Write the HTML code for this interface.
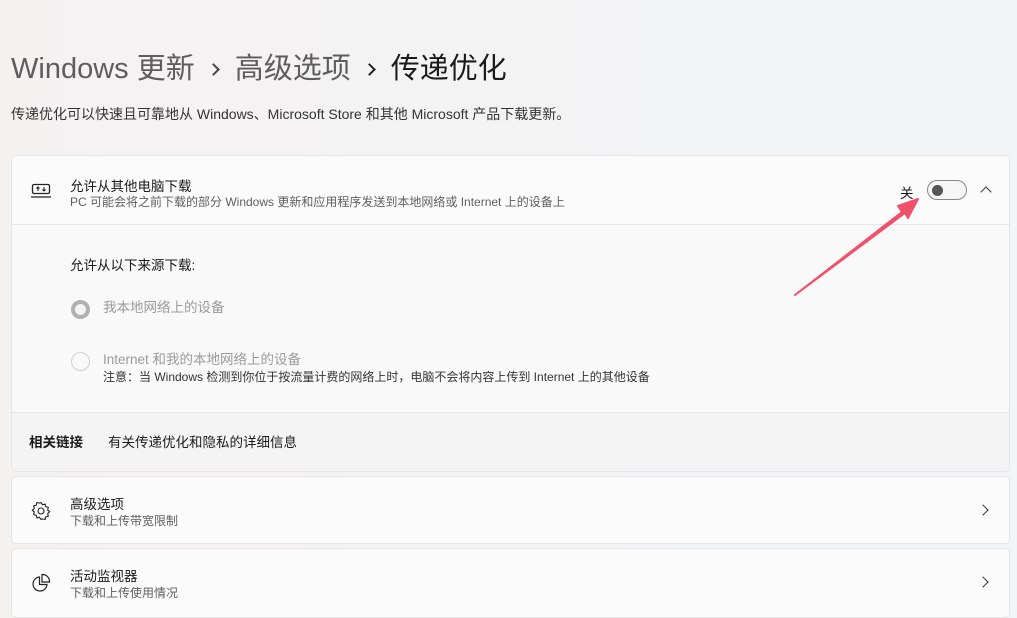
<!DOCTYPE html>
<html><head><meta charset="utf-8"><style>
*{margin:0;padding:0;box-sizing:border-box}
body{width:1017px;height:612px;overflow:hidden;background:linear-gradient(90deg,#f5f1f1 0%,#f3f3f4 40%,#f3f4f6 100%);font-family:"Liberation Sans","Noto Sans CJK SC",sans-serif;color:#1b1b1b;position:relative}
.abs{position:absolute}
h1{position:absolute;left:11px;top:45px;font-size:29px;font-weight:400;color:#1b1b1b;white-space:nowrap}
h1 .g{color:#5d5d5d}
.card{position:absolute;left:11px;width:999px;background:#fbfbfb;border:1px solid #e5e5e5;border-radius:5px;overflow:hidden}
.t{font-size:13.5px;color:#1b1b1b}
.s{font-size:12px;color:#5f5f5f}
.chev{position:absolute;right:22px;width:8px;height:8px;border-right:1.3px solid #333;border-top:1.3px solid #333;transform:rotate(45deg)}
.sep{display:inline-block;width:9px;height:9px;border-right:2px solid #444;border-top:2px solid #444;transform:rotate(45deg);margin:0 17px 4px 14px}
</style></head><body>
<h1><span class="g">Windows 更新</span><span class="sep"></span><span class="g">高级选项</span><span class="sep" style="border-color:#222"></span>传递优化</h1>
<div class="abs" style="left:11px;top:104px;font-size:14px;color:#333">传递优化可以快速且可靠地从 Windows、Microsoft Store 和其他 Microsoft 产品下载更新。</div>

<div class="card" style="top:155px;height:317px">
 <div style="height:69px;border-bottom:1px solid #e5e5e5;position:relative;background:#fbfbfb">
  <svg class="abs" style="left:19px;top:27px" width="20" height="16" viewBox="0 0 20 16"><rect x="1.5" y="1.5" width="17" height="9" rx="1.5" fill="none" stroke="#222" stroke-width="1.3"/><path d="M7 8V4M5.5 5.5L7 4l1.5 1.5M13 4v4M11.5 6.5L13 8l1.5-1.5" stroke="#222" stroke-width="1.1" fill="none"/><path d="M0 14h20" stroke="#222" stroke-width="1.3"/></svg>
  <div class="t abs" style="left:58px;top:19px">允许从其他电脑下载</div>
  <div class="s abs" style="left:58px;top:37px">PC 可能会将之前下载的部分 Windows 更新和应用程序发送到本地网络或 Internet 上的设备上</div>
  <div class="t abs" style="left:888px;top:26px">关</div>
  <div class="abs" style="left:915px;top:24px;width:40px;height:20px;border:1px solid #888;border-radius:10px;background:#f6f6f6"><div style="position:absolute;left:4px;top:4px;width:11px;height:11px;border-radius:50%;background:#555"></div></div>
  <div class="abs" style="left:970px;top:32px;width:8px;height:8px;border-left:1.3px solid #333;border-top:1.3px solid #333;transform:rotate(45deg)"></div>
 </div>
 <div style="height:188px;position:relative;background:#f9f9fa;border-bottom:1px solid #e5e5e5">
  <div class="t abs" style="left:58px;top:29px">允许从以下来源下载:</div>
  <div class="abs" style="left:59px;top:75px;width:19px;height:19px;border-radius:50%;border:4px solid #b0b0b0;background:#f3f3f3"></div>
  <div class="abs" style="left:91px;top:71px;font-size:13.5px;color:#9a9a9a">我本地网络上的设备</div>
  <div class="abs" style="left:59px;top:127px;width:19px;height:19px;border-radius:50%;border:1px solid #cfcfcf"></div>
  <div class="abs" style="left:91px;top:123px;font-size:13.5px;color:#9a9a9a">Internet 和我的本地网络上的设备</div>
  <div class="abs" style="left:91px;top:143px;font-size:12px;color:#333">注意：当 Windows 检测到你位于按流量计费的网络上时，电脑不会将内容上传到 Internet 上的其他设备</div>
 </div>
 <div style="height:58px;position:relative;background:#f4f4f4">
  <div class="abs" style="left:17px;top:18px;font-size:13.5px;font-weight:bold">相关链接</div>
  <div class="abs" style="left:96px;top:18px;font-size:13.5px">有关传递优化和隐私的详细信息</div>
 </div>
</div>

<div class="card" style="top:476px;height:68px">
 <svg class="abs" style="left:19px;top:24px" width="20" height="20" viewBox="0 0 20 20"><path d="M10 1.5l1.5 2.2 2.6-.6.6 2.6 2.6.7-.6 2.6 2 1.8-2 1.8.6 2.6-2.6.7-.6 2.6-2.6-.6L10 18.5l-1.5-2.2-2.6.6-.6-2.6-2.6-.7.6-2.6-2-1.8 2-1.8-.6-2.6 2.6-.7.6-2.6 2.6.6z" fill="none" stroke="#222" stroke-width="1.1"/><circle cx="10" cy="10" r="3" fill="none" stroke="#222" stroke-width="1.1"/></svg>
 <div class="t abs" style="left:58px;top:16px">高级选项</div>
 <div class="s abs" style="left:58px;top:35px">下载和上传带宽限制</div>
 <div class="chev" style="top:29px"></div>
</div>
<div class="card" style="top:548px;height:70px">
 <svg class="abs" style="left:19px;top:24px" width="20" height="20" viewBox="0 0 20 20"><path d="M8.5 4A7 7 0 1 0 16 11.5H8.5z" fill="none" stroke="#222" stroke-width="1.2"/><path d="M11 1.5A7 7 0 0 1 18.5 9H11z" fill="none" stroke="#222" stroke-width="1.2"/></svg>
 <div class="t abs" style="left:58px;top:16px">活动监视器</div>
 <div class="s abs" style="left:58px;top:35px">下载和上传使用情况</div>
 <div class="chev" style="top:29px"></div>
</div>

<svg class="abs" style="left:790px;top:195px" width="135" height="105" viewBox="0 0 135 105"><path d="M5 100L112 17l-4-6 20-7-10 19-3-5z" fill="#f0506a" stroke="#f0506a" stroke-width="2" stroke-linejoin="round"/></svg>
</body></html>
